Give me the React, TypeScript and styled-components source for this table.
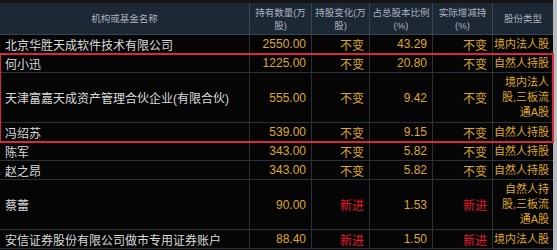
import React from 'react';
import styled, { createGlobalStyle } from 'styled-components';

const GlobalStyle = createGlobalStyle`
  html, body {
    margin: 0;
    padding: 0;
    background: #0a0a0a;
  }
  body {
    font-family: "Liberation Sans", "Noto Sans CJK SC", sans-serif;
  }
`;

const COLS = '250px 62px 58px 63px 60px 60px';

type Holder = {
  name: string;
  amount: string;
  change: string;
  ratio: string;
  actual: string;
  type: string[];
  tall?: boolean;
};

const holders: Holder[] = [
  { name: '北京华胜天成软件技术有限公司', amount: '2550.00', change: '不变', ratio: '43.29', actual: '不变', type: ['境内法人股'] },
  { name: '何小迅', amount: '1225.00', change: '不变', ratio: '20.80', actual: '不变', type: ['自然人持股'] },
  { name: '天津富嘉天成资产管理合伙企业(有限合伙)', amount: '555.00', change: '不变', ratio: '9.42', actual: '不变', type: ['境内法人', '股,三板流', '通A股'], tall: true },
  { name: '冯绍苏', amount: '539.00', change: '不变', ratio: '9.15', actual: '不变', type: ['自然人持股'] },
  { name: '陈军', amount: '343.00', change: '不变', ratio: '5.82', actual: '不变', type: ['自然人持股'] },
  { name: '赵之昂', amount: '343.00', change: '不变', ratio: '5.82', actual: '不变', type: ['自然人持股'] },
  { name: '蔡蕾', amount: '90.00', change: '新进', ratio: '1.53', actual: '新进', type: ['自然人持', '股,三板流', '通A股'], tall: true },
  { name: '安信证券股份有限公司做市专用证券账户', amount: '88.40', change: '新进', ratio: '1.50', actual: '新进', type: ['境内法人股'] },
];

const headers: string[][] = [
  ['机构或基金名称'],
  ['持有数量(万', '股)'],
  ['持股变化(万', '股)'],
  ['占总股本比例', '(%)'],
  ['实际增减持', '(%)'],
  ['股份类型'],
];

const Page = styled.div`
  display: flex;
  width: 557px;
  height: 250px;
  overflow: hidden;
  background: #0a0a0a;
`;

const Table = styled.div`
  width: 553px;
  display: flex;
  flex-direction: column;
  border-top: 3px solid #141414;
`;

const RightEdge = styled.div`
  width: 4px;
  background: #b9bcbf;
`;

const HeaderRow = styled.div`
  display: grid;
  grid-template-columns: ${COLS};
  height: 31px;
  background: #1d2835;
  border-bottom: 1px solid #3a4552;
`;

const HeadCell = styled.div`
  display: flex;
  flex-direction: column;
  align-items: center;
  justify-content: center;
  text-align: center;
  font-size: 9.5px;
  line-height: 13px;
  white-space: nowrap;
  color: #a9b3be;
  border-right: 1px solid #3a4552;
  &:last-child {
    border-right: none;
  }
`;

const Row = styled.div<{ $tall?: boolean }>`
  display: grid;
  grid-template-columns: ${COLS};
  height: ${({ $tall }) => ($tall ? '49px' : '18px')};
  border-bottom: 1px solid #2e3236;
  background: #050505;
`;

const Highlight = styled.div`
  display: flex;
  flex-direction: column;
  outline: 2px solid #d8283e;
  outline-offset: -1px;
  position: relative;
  z-index: 1;
`;

const Cell = styled.div<{ $align?: 'left' | 'right'; $tone?: 'name' | 'gold' | 'red' }>`
  display: flex;
  align-items: center;
  justify-content: ${({ $align }) => ($align === 'left' ? 'flex-start' : 'flex-end')};
  padding: 0 5px;
  font-size: 12px;
  white-space: nowrap;
  overflow: hidden;
  color: ${({ $tone }) =>
    $tone === 'name' ? '#d9dadb' : $tone === 'red' ? '#e3192b' : '#dfa82a'};
  border-right: 1px solid #2e3236;
  &:last-child {
    border-right: none;
  }
`;

const TypeCell = styled(Cell)`
  flex-direction: column;
  align-items: flex-end;
  justify-content: center;
  padding: 0 4px 0 2px;
  font-size: 11px;
  line-height: 15px;
`;

const HolderRow: React.FC<{ h: Holder }> = ({ h }) => (
  <Row $tall={h.tall}>
    <Cell $align="left" $tone="name">{h.name}</Cell>
    <Cell $tone="gold">{h.amount}</Cell>
    <Cell $tone={h.change === '新进' ? 'red' : 'gold'}>{h.change}</Cell>
    <Cell $tone="gold">{h.ratio}</Cell>
    <Cell $tone={h.actual === '新进' ? 'red' : 'gold'}>{h.actual}</Cell>
    <TypeCell $tone="gold">
      {h.type.map((line) => (
        <span key={line}>{line}</span>
      ))}
    </TypeCell>
  </Row>
);

const App: React.FC = () => (
  <Page>
    <GlobalStyle />
    <Table>
      <HeaderRow>
        {headers.map((lines) => (
          <HeadCell key={lines.join('')}>
            {lines.map((l) => (
              <span key={l}>{l}</span>
            ))}
          </HeadCell>
        ))}
      </HeaderRow>
      <HolderRow h={holders[0]} />
      <Highlight>
        {holders.slice(1, 4).map((h) => (
          <HolderRow key={h.name} h={h} />
        ))}
      </Highlight>
      {holders.slice(4).map((h) => (
        <HolderRow key={h.name} h={h} />
      ))}
    </Table>
    <RightEdge />
  </Page>
);

export default App;
